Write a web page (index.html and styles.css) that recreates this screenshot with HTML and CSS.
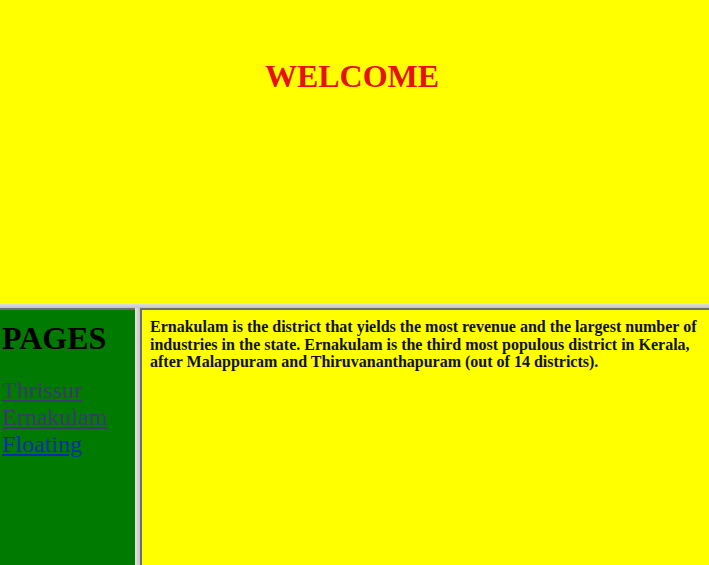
FILE: index.html
```html
<!DOCTYPE html>
<html>
<head>
<meta charset="utf-8">
<link rel="stylesheet" href="styles.css">
</head>
<body>
<div class="frame-top">
  <h1 class="welcome">WELCOME</h1>
</div>
<div class="divider-h"></div>
<div class="bottom">
  <div class="frame-left">
    <h1 class="pages">PAGES</h1>
    <a class="link visited" href="#">Thrissur</a>
    <a class="link visited" href="#">Ernakulam</a>
    <a class="link fresh" href="#">Floating</a>
  </div>
  <div class="divider-v"></div>
  <div class="frame-right">
    <p class="info">Ernakulam is the district that yields the most revenue and the largest number of industries in the state. Ernakulam is the third most populous district in Kerala, after Malappuram and Thiruvananthapuram (out of 14 districts).</p>
  </div>
</div>
</body>
</html>
```
FILE: styles.css
```css
html, body {
  margin: 0;
  padding: 0;
  height: 565px;
  overflow: hidden;
  font-family: "Liberation Serif", "Times New Roman", serif;
}
body {
  display: flex;
  flex-direction: column;
  background: #d0d0d0;
}
.frame-top {
  height: 303px;
  background: #ffff00;
  overflow: hidden;
}
.welcome {
  margin: 58px 5px 0 0;
  font-size: 32px;
  font-weight: bold;
  color: #e81010;
  text-align: center;
}
.divider-h {
  height: 5px;
  background: linear-gradient(#e4e4e4, #c4c4c4);
}
.bottom {
  flex: 1;
  display: flex;
  min-height: 0;
}
.frame-left {
  width: 135px;
  background: #007a00;
  border-top: 2px solid #6e6e6e;
  padding-left: 2px;
  box-sizing: border-box;
  overflow: hidden;
}
.pages {
  margin: 10px 0 20px 0;
  font-size: 32px;
  font-weight: bold;
  color: #000;
}
.link {
  display: block;
  font-size: 24px;
  line-height: 27px;
  text-decoration: underline;
}
.visited {
  color: #3b3a6c;
}
.fresh {
  color: #0c2cb8;
}
.divider-v {
  width: 5px;
  background: linear-gradient(90deg, #e4e4e4, #c4c4c4);
}
.frame-right {
  flex: 1;
  background: #ffff00;
  border-top: 2px solid #6e6e6e;
  border-left: 2px solid #6e6e6e;
  padding: 8px 8px 8px 8px;
  overflow: hidden;
}
.info {
  margin: 0;
  font-size: 16px;
  line-height: 17.5px;
  font-weight: bold;
  color: #111;
}
```
